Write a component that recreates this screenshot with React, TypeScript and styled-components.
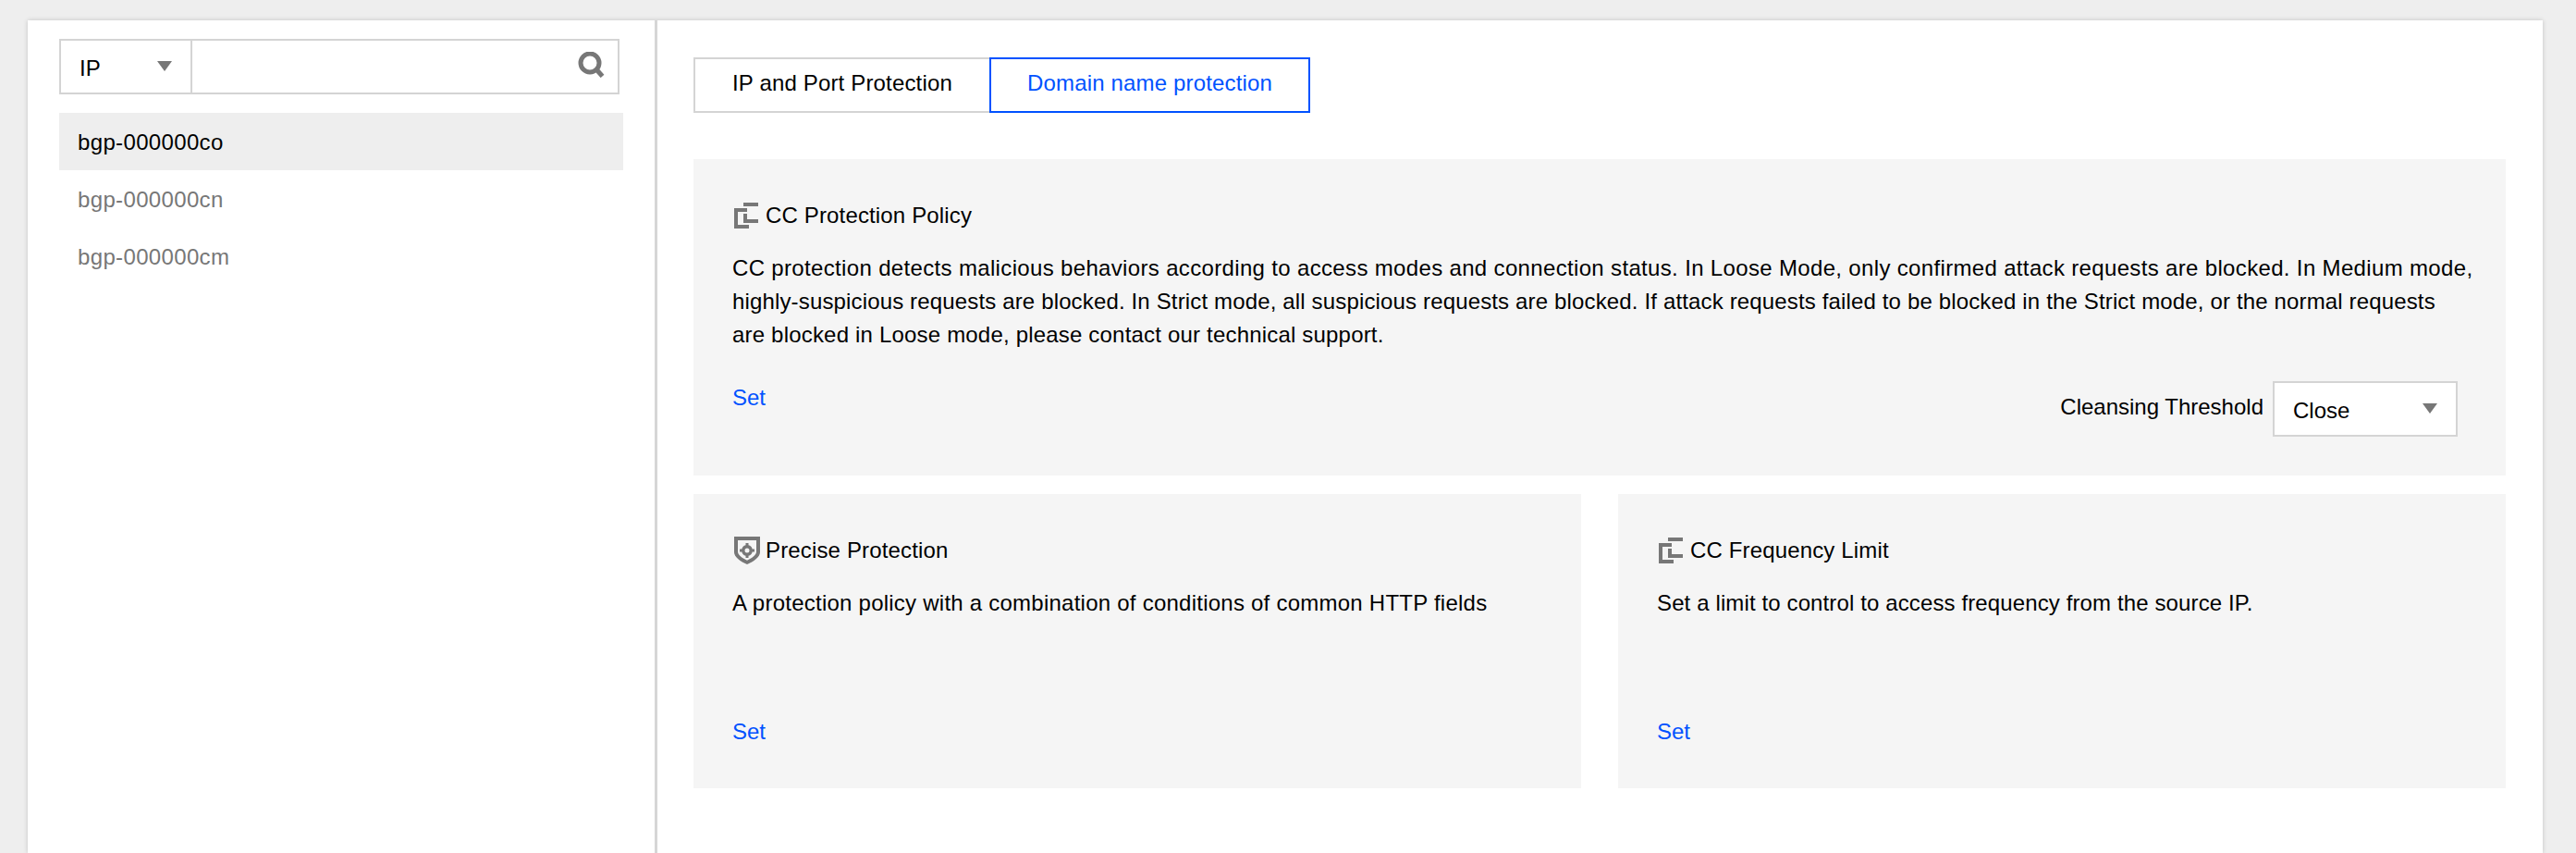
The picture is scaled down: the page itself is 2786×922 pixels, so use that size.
import React from "react";
import styled, { createGlobalStyle } from "styled-components";

const Global = createGlobalStyle`
  html, body { margin: 0; padding: 0; height: 100%; overflow: hidden; }
  body { background: #eeeeee; font-family: "Liberation Sans", Arial, sans-serif; font-size: 24px; line-height: 36px; color: #000; }
  * { box-sizing: border-box; }
`;

const Page = styled.div`
  height: 922px;
  padding: 22px 36px 0 30px;
`;
const Card = styled.div`
  height: 900px;
  display: flex;
  background: #fff;
  box-shadow: 0 0 5px rgba(0, 0, 0, 0.18);
`;
const Sidebar = styled.aside`
  flex: 0 0 681px;
  padding: 20px 34px 0 34px;
  border-right: 3px solid #d6d6d6;
`;
const SearchBox = styled.div`
  width: 606px;
  height: 60px;
  display: flex;
  align-items: center;
  border: 2px solid #d4d4d4;
`;
const SelectArea = styled.div<{ $width: number }>`
  flex: 0 0 ${(p) => p.$width}px;
  height: 100%;
  display: flex;
  align-items: center;
  justify-content: space-between;
  padding: 3px 20px 0 20px;
`;
const SearchInput = styled.input`
  flex: 1;
  min-width: 0;
  height: 100%;
  border: 0;
  border-left: 2px solid #d4d4d4;
  background: transparent;
  outline: none;
`;
const SearchIcon = styled.svg`
  flex: 0 0 auto;
  width: 30px;
  height: 28px;
  margin: -4px 13px 0 9px;
`;
const Caret = styled.svg`
  flex: 0 0 auto;
  width: 16px;
  height: 11px;
  margin-top: -5px;
`;
const List = styled.ul`
  list-style: none;
  margin: 20px 0 0;
  padding: 0;
`;
const Item = styled.li<{ $active?: boolean }>`
  height: 62px;
  line-height: 62px;
  padding: 1px 0 0 20px;
  color: ${(p) => (p.$active ? "#000" : "#777")};
  background: ${(p) => (p.$active ? "#eeeeee" : "transparent")};
  letter-spacing: 0.35px;
`;
const Main = styled.main`
  flex: 1;
  min-width: 0;
  padding: 40px 40px 0 39px;
`;
const Tabs = styled.div`
  display: flex;
  height: 60px;
`;
const Tab = styled.div<{ $active?: boolean; $width: number }>`
  width: ${(p) => p.$width}px;
  height: 60px;
  display: flex;
  align-items: center;
  justify-content: center;
  border: 2px solid ${(p) => (p.$active ? "#0052ff" : "#d4d4d4")};
  border-right-width: ${(p) => (p.$active ? "2px" : "0")};
  color: ${(p) => (p.$active ? "#0052ff" : "#000")};
  padding-bottom: 4px;
  letter-spacing: 0.16px;
`;
const Stack = styled.div`
  margin-top: 50px;
  display: flex;
  flex-direction: column;
  gap: 20px;
`;
const Panel = styled.section<{ $height: number }>`
  height: ${(p) => p.$height}px;
  background: #f5f5f5;
  padding: 43px 42px 43px;
  display: flex;
  flex-direction: column;
`;
const Row = styled.div`
  display: grid;
  grid-template-columns: 1fr 1fr;
  gap: 40px;
`;
const Title = styled.h3`
  margin: 0 0 21px;
  font-size: 24px;
  font-weight: 400;
  line-height: 36px;
  display: flex;
  align-items: center;
  letter-spacing: 0.15px;
`;
const TitleIcon = styled.svg<{ $w: number; $h: number }>`
  flex: 0 0 auto;
  width: ${(p) => p.$w}px;
  height: ${(p) => p.$h}px;
  margin: 0 ${(p) => 34 - p.$w}px 0 2px;
  fill: #777;
`;
const Text = styled.p<{ $spacing?: number }>`
  margin: 0;
  letter-spacing: ${(p) => p.$spacing ?? 0}px;
`;
const TextLine = styled.span<{ $spacing: number }>`
  display: block;
  white-space: nowrap;
  letter-spacing: ${(p) => p.$spacing}px;
`;
const Footer = styled.div`
  margin-top: 32px;
  display: flex;
  justify-content: space-between;
  align-items: flex-start;
  padding-right: 10px;
`;
const SetLink = styled.a`
  color: #0052ff;
  cursor: pointer;
`;
const BottomLink = styled(SetLink)`
  margin-top: auto;
`;
const Threshold = styled.div`
  display: flex;
  align-items: flex-start;
  gap: 10px;
`;
const Label = styled.span`
  margin-top: 10px;
`;
const SelectBox = styled.div`
  width: 200px;
  height: 60px;
  border: 2px solid #d4d4d4;
  background: #fff;
`;

const ArrowDown = () => (
  <Caret viewBox="0 0 16 11">
    <path d="M0 0h16L8 11z" fill="#777" />
  </Caret>
);

const CcIcon = () => (
  <TitleIcon $w={26} $h={28} viewBox="0 0 26 28">
    <path d="M10 0h16v4H10zM0 6h14v4H4v14h12v4H0zM10 12h4v6h12v4H10z" />
  </TitleIcon>
);

const ShieldIcon = () => (
  <TitleIcon $w={28} $h={30} viewBox="0 0 28 30">
    <path
      fillRule="evenodd"
      d="M0 0h28v17c0 5-7 10-14 13C7 27 0 22 0 17zM4 4v12.5c0 3 5 7 10 9.300 5-2.300 10-6.300 10-9.300V4z"
    />
    <path
      fillRule="evenodd"
      d="M12.500 7h3v2.300A5.500 5.500 0 0 1 19.700 13.500H22v3h-2.300a5.500 5.500 0 0 1-4.200 4.200V23h-3v-2.300a5.500 5.500 0 0 1-4.200-4.200H6v-3h2.300a5.500 5.500 0 0 1 4.200-4.200zM14 12.500a2.500 2.500 0 1 0 0 5 2.500 2.500 0 0 0 0-5z"
    />
  </TitleIcon>
);

export default function App() {
  return (
    <>
      <Global />
      <Page>
        <Card>
          <Sidebar>
            <SearchBox>
              <SelectArea $width={140}>
                <span>IP</span>
                <ArrowDown />
              </SelectArea>
              <SearchInput aria-label="Search" />
              <SearchIcon viewBox="0 0 30 28">
                <circle cx="13" cy="12" r="10" fill="none" stroke="#777" strokeWidth="5" />
                <path d="M20 19l6.500 7.500" stroke="#777" strokeWidth="5" fill="none" />
              </SearchIcon>
            </SearchBox>
            <List>
              <Item $active>bgp-000000co</Item>
              <Item>bgp-000000cn</Item>
              <Item>bgp-000000cm</Item>
            </List>
          </Sidebar>
          <Main>
            <Tabs>
              <Tab $width={320}>IP and Port Protection</Tab>
              <Tab $active $width={347}>Domain name protection</Tab>
            </Tabs>
            <Stack>
              <Panel $height={342}>
                <Title>
                  <CcIcon />
                  CC Protection Policy
                </Title>
                <Text>
                  <TextLine $spacing={0.34}>CC protection detects malicious behaviors according to access modes and connection status. In Loose Mode, only confirmed attack requests are blocked. In Medium mode,</TextLine>
                  <TextLine $spacing={0.15}>highly-suspicious requests are blocked. In Strict mode, all suspicious requests are blocked. If attack requests failed to be blocked in the Strict mode, or the normal requests</TextLine>
                  <TextLine $spacing={0.19}>are blocked in Loose mode, please contact our technical support.</TextLine>
                </Text>
                <Footer>
                  <SetLink>Set</SetLink>
                  <Threshold>
                    <Label>Cleansing Threshold</Label>
                    <SelectBox>
                      <SelectArea $width={196}>
                        <span>Close</span>
                        <ArrowDown />
                      </SelectArea>
                    </SelectBox>
                  </Threshold>
                </Footer>
              </Panel>
              <Row>
                <Panel $height={318}>
                  <Title>
                    <ShieldIcon />
                    Precise Protection
                  </Title>
                  <Text $spacing={0.24}>A protection policy with a combination of conditions of common HTTP fields</Text>
                  <BottomLink>Set</BottomLink>
                </Panel>
                <Panel $height={318}>
                  <Title>
                    <CcIcon />
                    CC Frequency Limit
                  </Title>
                  <Text $spacing={0.12}>Set a limit to control to access frequency from the source IP.</Text>
                  <BottomLink>Set</BottomLink>
                </Panel>
              </Row>
            </Stack>
          </Main>
        </Card>
      </Page>
    </>
  );
}
